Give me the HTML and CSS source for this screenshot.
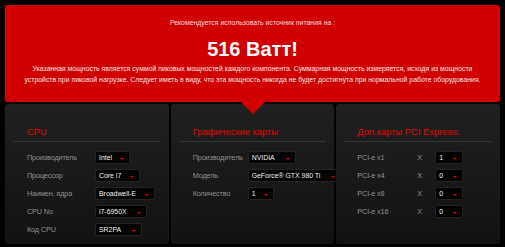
FILE: index.html
```html
<!DOCTYPE html>
<html>
<head>
<meta charset="utf-8">
<link rel="stylesheet" href="styles.css">
</head>
<body>
<div class="page">
  <div class="banner">
    <div class="rec">Рекомендуется использовать источник питания на :</div>
    <div class="watt">516 Ватт!</div>
    <div class="note">Указанная мощность является суммой пиковых мощностей каждого компонента. Суммарная мощность измеряется, исходя из мощности<br>устройств при пиковой нагрузке. Следует иметь в виду, что эта мощность никогда не будет достигнута при нормальной работе оборудования.</div>
    <div class="arrow"></div>
  </div>
  <div class="panels">
    <div class="panel p1">
      <div class="title">CPU</div>
      <div class="rows">
        <div class="row"><span class="lab">Производитель</span><span class="sel">Intel<i class="caret"></i></span></div>
        <div class="row"><span class="lab">Процессор</span><span class="sel">Core i7<i class="caret"></i></span></div>
        <div class="row"><span class="lab">Наимен. ядра</span><span class="sel">Broadwell-E<i class="caret"></i></span></div>
        <div class="row"><span class="lab">CPU No</span><span class="sel">i7-6950X<i class="caret"></i></span></div>
        <div class="row"><span class="lab">Код CPU</span><span class="sel">SR2PA<i class="caret"></i></span></div>
      </div>
    </div>
    <div class="panel p2">
      <div class="title">Графические карты</div>
      <div class="rows">
        <div class="row"><span class="lab">Производитель</span><span class="sel">NVIDIA<i class="caret"></i></span></div>
        <div class="row"><span class="lab">Модель</span><span class="sel">GeForce® GTX 980 Ti<i class="caret"></i></span></div>
        <div class="row"><span class="lab">Количество</span><span class="sel">1<i class="caret"></i></span></div>
      </div>
    </div>
    <div class="panel p3">
      <div class="title">Доп.карты PCI Express:</div>
      <div class="rows">
        <div class="row"><span class="lab">PCI-e x1</span><span class="x">X</span><span class="sel">1<i class="caret"></i></span></div>
        <div class="row"><span class="lab">PCI-e x4</span><span class="x">X</span><span class="sel">0<i class="caret"></i></span></div>
        <div class="row"><span class="lab">PCI-e x8</span><span class="x">X</span><span class="sel">0<i class="caret"></i></span></div>
        <div class="row"><span class="lab">PCI-e x16</span><span class="x">X</span><span class="sel">0<i class="caret"></i></span></div>
      </div>
    </div>
  </div>
</div>
</body>
</html>
```
FILE: styles.css
```css
html, body {
  margin: 0;
  padding: 0;
  background: #000;
}
body {
  font-family: "Liberation Sans", Arial, sans-serif;
  width: 505px;
  height: 247px;
  overflow: hidden;
}
.page {
  padding: 5px 5px 0 5px;
}
.banner {
  position: relative;
  background: #d00000;
  height: 97px;
  box-sizing: border-box;
  padding-top: 13px;
  text-align: center;
  color: #fff;
  border-radius: 2px;
}
.rec {
  font-size: 6.9px;
  line-height: 10px;
  color: #f6dede;
}
.watt {
  font-size: 20px;
  font-weight: bold;
  line-height: 24px;
  margin-top: 9px;
}
.note {
  font-size: 6.9px;
  line-height: 11px;
  margin: 2px 8px 0 8px;
  color: #f6e6e6;
  white-space: nowrap;
}
.arrow {
  position: absolute;
  left: 50%;
  bottom: -12px;
  margin-left: -12px;
  width: 0;
  height: 0;
  border-left: 12px solid transparent;
  border-right: 12px solid transparent;
  border-top: 12px solid #d00000;
  z-index: 2;
}
.panels {
  display: flex;
  gap: 2px;
  margin-top: 2px;
  height: 140px;
}
.panel {
  flex: 1 1 0;
  min-width: 0;
  background: linear-gradient(#202020, #121212);
  border-radius: 3px;
  box-sizing: border-box;
  padding: 21px 8px 0 8px;
}
.title {
  color: #e60000;
  font-size: 9.4px;
  line-height: 13px;
  padding-left: 14px;
  padding-bottom: 3px;
  border-bottom: 1px solid #333;
  white-space: nowrap;
}
.p3 .title {
  padding-left: 13px;
}
.rows {
  padding-top: 6px;
  padding-left: 14px;
}
.p3 .rows {
  padding-left: 13px;
}
.row {
  display: flex;
  align-items: center;
  height: 18px;
}
.lab {
  color: #8e8e8e;
  font-size: 7.3px;
  letter-spacing: -0.15px;
  width: 68px;
  flex: none;
  white-space: nowrap;
}
.p2 .lab {
  width: 55px;
}
.p3 .lab {
  width: 60px;
}
.x {
  color: #8e8e8e;
  font-size: 7.3px;
  width: 18px;
}
.sel {
  display: inline-flex;
  align-items: center;
  height: 13px;
  box-sizing: border-box;
  background: #030303;
  border: 1px solid #232323;
  border-radius: 2px;
  color: #f0f0f0;
  font-size: 6.9px;
  padding: 0 5px 0 3px;
  white-space: nowrap;
}
.caret {
  display: inline-block;
  width: 0;
  height: 0;
  margin-left: 6px;
  margin-top: 3px;
  border-left: 2px solid transparent;
  border-right: 2px solid transparent;
  border-top: 2px solid #e00000;
}
.p1 .row:nth-child(1) .sel .caret { margin-left: 8px; }
.p1 .row:nth-child(2) .sel .caret { margin-left: 9px; }
.p1 .row:nth-child(3) .sel .caret { margin-left: 9px; }
.p1 .row:nth-child(4) .sel .caret { margin-left: 10px; }
.p1 .row:nth-child(5) .sel .caret { margin-left: 11px; }
.p2 .row:nth-child(1) .sel .caret { margin-left: 11px; }
.p2 .row:nth-child(2) .sel .caret { margin-left: 11px; }
.p2 .row:nth-child(3) .sel .caret { margin-left: 8px; }
.p3 .sel .caret { margin-left: 10px; }
```
